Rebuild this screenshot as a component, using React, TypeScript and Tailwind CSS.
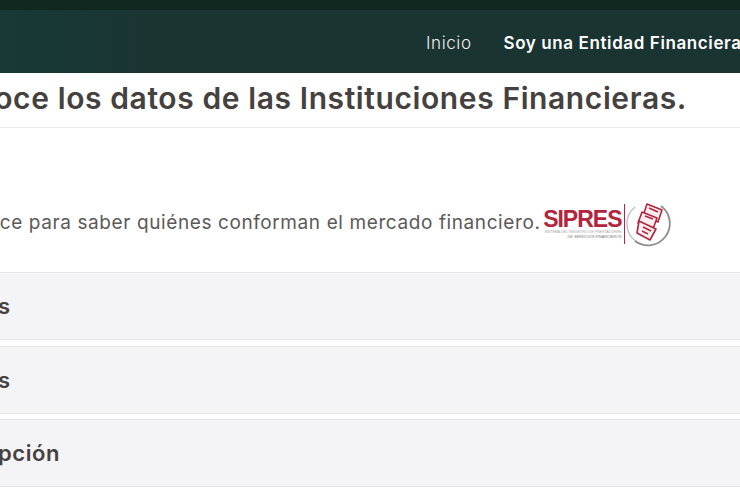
function Logo() {
  return (
    <div className="flex items-center shrink-0 ml-[4px] mt-[1px] font-['Liberation_Sans',sans-serif]">
      <div className="flex flex-col items-end w-[77px]">
        <span className="text-[23px] leading-[21px] font-bold tracking-[-1px] text-[#b3253d]">SIPRES</span>
        <span className="text-[3.6px] leading-[4.5px] text-[#a5a5a5] whitespace-nowrap">SISTEMA DEL REGISTRO DE PRESTADORES</span>
        <span className="text-[3.8px] leading-[4.5px] text-[#777777] whitespace-nowrap">DE SERVICIOS FINANCIEROS</span>
      </div>
      <div className="w-[1.5px] h-[40px] bg-[#b3253d] ml-[2px]" />
      <svg width="48" height="46" viewBox="0 0 48 46">
        <path d="M10 6 A21.5 21.5 0 0 0 12 41" fill="none" stroke="#bdbdbd" strokeWidth="1.3" />
        <path d="M36 5 A21.5 21.5 0 0 1 10 40" fill="none" stroke="#8c8c8c" strokeWidth="1.8" />
        <g fill="#fbeef0" stroke="#b3253d" strokeWidth="1.6" strokeLinejoin="round">
          <path d="M22 3 L37 9 L33 21 L18 15 Z" />
          <path d="M17 11 L32 17 L28 28 L13 22 Z" />
          <path d="M14 20 L31 28 L25 39 L12 32 Z" />
        </g>
        <path d="M24 7 L33 11 M20 15 L28 18 M18 26 L26 30 M17 30 L23 33" stroke="#b3253d" strokeWidth="1.5" fill="none" />
      </svg>
    </div>
  )
}

function Row({ label, className }: { label: string; className: string }) {
  return (
    <div className={`bg-[#f4f3f6] border-y border-[#e6e4e8] flex items-center overflow-hidden ${className}`}>
      <h3 className="text-[22px] font-semibold tracking-[0.6px] -ml-[2px] pt-[1px] text-[#45413f] whitespace-nowrap">{label}</h3>
    </div>
  )
}

export default function App() {
  return (
    <main className="w-[740px] h-[499px] overflow-hidden bg-white font-['Inter','Open_Sans',sans-serif]">
      <div className="h-[10px] bg-[#10281f]" />
      <nav className="h-[63px] bg-gradient-to-r from-[#163a36] from-0% to-[#1a3432] to-[20%] flex items-center pl-[426px] pt-[5px] gap-[32px] overflow-hidden">
        <a className="text-[17px] font-light tracking-[0.6px] text-[#f0f0ee] whitespace-nowrap">Inicio</a>
        <a className="text-[17px] font-semibold tracking-[0.6px] text-white whitespace-nowrap">Soy una Entidad Financiera</a>
      </nav>
      <div className="h-[55px] border-b border-[#ececec] flex items-center justify-end pr-[53px] pb-[3px] overflow-hidden">
        <h1 className="text-[30px] font-semibold tracking-[0.6px] text-[#45413f] whitespace-nowrap">Conoce los datos de las Instituciones Financieras.</h1>
      </div>
      <div className="h-[144px] flex items-center justify-end pr-[67px] pt-[47px] overflow-hidden">
        <p className="text-[19px] tracking-[0.6px] text-[#5c5959] whitespace-nowrap">Conoce para saber quiénes conforman el mercado financiero.</p>
        <Logo />
      </div>
      <div className="flex flex-col">
        <Row label="s" className="h-[68px]" />
        <Row label="s" className="h-[68px] mt-[6px]" />
        <Row label="pción" className="h-[68px] mt-[5px]" />
      </div>
    </main>
  )
}
